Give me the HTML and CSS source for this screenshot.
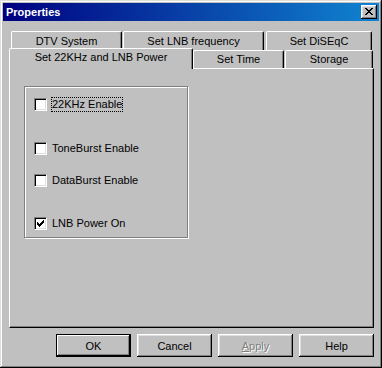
FILE: index.html
```html
<!DOCTYPE html>
<html lang="en">
<head>
  <meta charset="UTF-8">
  <title>Properties</title>
  <link rel="stylesheet" href="styles.css">
</head>
<body>

  <div class="window">
    <div class="titlebar">
      <span class="title">Properties</span>
      <button class="close-btn" title="Close">
        <svg width="8" height="7" viewBox="0 0 8 7" shape-rendering="crispEdges">
          <path fill="#000" d="M0 0h2v1h-2z M6 0h2v1h-2z M1 1h2v1h-2z M5 1h2v1h-2z M2 2h4v1h-4z M3 3h2v1h-2z M2 4h4v1h-4z M1 5h2v1h-2z M5 5h2v1h-2z M0 6h2v1h-2z M6 6h2v1h-2z"/>
        </svg>
      </button>
    </div>

    <div class="dialog">
      <div class="tabs">
        <div class="tab-row back">
          <div class="tab tab-dtv">DTV System</div>
          <div class="tab tab-lnb">Set LNB frequency</div>
          <div class="tab tab-diseqc">Set DiSEqC</div>
        </div>
        <div class="tab-row front">
          <div class="tab tab-power selected">Set 22KHz and LNB Power</div>
          <div class="tab tab-time">Set Time</div>
          <div class="tab tab-storage">Storage</div>
        </div>
      </div>

      <div class="panel">
        <div class="groupbox">
          <div class="check-row">
            <span class="checkbox"></span>
            <span class="label focused">22KHz Enable</span>
          </div>
          <div class="check-row far">
            <span class="checkbox"></span>
            <span class="label">ToneBurst Enable</span>
          </div>
          <div class="check-row near">
            <span class="checkbox"></span>
            <span class="label">DataBurst Enable</span>
          </div>
          <div class="check-row far last">
            <span class="checkbox">
              <svg width="7" height="7" viewBox="0 0 7 7" shape-rendering="crispEdges">
                <path fill="#000" d="M6 0h1v1h-1z M5 1h2v1h-2z M0 2h1v1h-1z M4 2h3v1h-3z M0 3h2v1h-2z M3 3h3v1h-3z M0 4h5v1h-5z M1 5h3v1h-3z M2 6h1v1h-1z"/>
              </svg>
            </span>
            <span class="label">LNB Power On</span>
          </div>
        </div>
      </div>

      <div class="buttons">
        <button class="btn default">OK</button>
        <button class="btn">Cancel</button>
        <button class="btn disabled"><u>A</u>pply</button>
        <button class="btn">Help</button>
      </div>
    </div>
  </div>

</body>
</html>
```

FILE: styles.css
```css
body {
  margin: 0;
  background: #c0c0c0;
  font-family: 'Liberation Sans', Arial, sans-serif;
  font-size: 11px;
  color: #000;
}

.window {
  width: 382px;
  height: 368px;
  box-sizing: border-box;
  padding: 3px;
  background: #c0c0c0;
  box-shadow: inset -1px -1px #000, inset 1px 1px #dfdfdf,
              inset -2px -2px #808080, inset 2px 2px #fff;
}

/* title bar */
.titlebar {
  height: 18px;
  display: flex;
  align-items: center;
  justify-content: space-between;
  background: linear-gradient(to right, #000080, #1084d0);
}

.title {
  color: #fff;
  font-weight: bold;
  line-height: 13px;
  padding-left: 3px;
}

.close-btn {
  width: 16px;
  height: 14px;
  margin-right: 2px;
  padding: 0;
  border: none;
  background: #c0c0c0;
  display: flex;
  align-items: flex-start;
  justify-content: flex-start;
  padding: 3px 0 0 4px;
  box-sizing: border-box;
  box-shadow: inset -1px -1px #000, inset 1px 1px #fff,
              inset -2px -2px #808080, inset 2px 2px #dfdfdf;
}

.close-btn svg {
  display: block;
}

.dialog {
  padding: 10px 5px 0 6px;
}

/* tabs */
.tab-row {
  display: flex;
  align-items: flex-end;
}

.tab-row.back {
  height: 19px;
  padding-left: 2px;
}

.tab-row.front {
  height: 18px;
}

.tab {
  box-sizing: border-box;
  display: flex;
  align-items: center;
  justify-content: center;
  line-height: 13px;
  white-space: nowrap;
  background: #c0c0c0;
  border-top: 1px solid #fff;
  border-left: 1px solid #fff;
  border-right: 1px solid #000;
  border-radius: 2px 2px 0 0;
  box-shadow: inset -1px 0 #808080;
}

.tab-row.back .tab { height: 19px; }
.tab-row.front .tab { height: 18px; }

.tab-dtv { width: 111px; margin-right: 1px; }
.tab-lnb { width: 141px; margin-right: 2px; }
.tab-diseqc { width: 106px; }

.tab-power { width: 184px; }
.tab-time { width: 91px; margin-right: 1px; }
.tab-storage { width: 88px; }

.tab-row.front .tab.selected {
  position: relative;
  z-index: 1;
  height: 21px;
  margin-bottom: -1px;
  align-items: flex-start;
  padding-top: 2px;
  border-radius: 2px 2px 0 0;
}

/* panel */
.panel {
  box-sizing: border-box;
  width: 365px;
  height: 260px;
  padding: 17px 0 0 14px;
  border-top: 1px solid #fff;
  border-left: 1px solid #fff;
  border-right: 1px solid #000;
  border-bottom: 1px solid #000;
  box-shadow: inset -1px -1px #808080;
}

.groupbox {
  box-sizing: border-box;
  width: 164px;
  height: 152px;
  padding: 10px 0 0 9px;
  border: 1px solid #808080;
  box-shadow: inset 1px 1px #fff, 1px 1px #fff;
}

.check-row {
  height: 15px;
  display: flex;
  align-items: center;
}

.check-row.near { margin-top: 17px; }
.check-row.far { margin-top: 29px; }
.check-row.last { margin-top: 28px; }

.checkbox {
  width: 13px;
  height: 13px;
  box-sizing: border-box;
  background: #fff;
  border: 1px solid;
  border-color: #808080 #fff #fff #808080;
  box-shadow: inset 1px 1px #000, inset -1px -1px #dfdfdf;
  display: flex;
  align-items: center;
  justify-content: center;
}

.checkbox svg {
  display: block;
}

.label {
  margin-left: 4px;
  line-height: 13px;
  border: 1px solid transparent;
}

.label.focused {
  border: 1px dotted #000;
}

/* bottom buttons */
.buttons {
  display: flex;
  justify-content: flex-end;
  gap: 6px;
  margin-top: 6px;
  width: 365px;
}

.btn {
  width: 75px;
  height: 23px;
  padding: 0;
  border: none;
  background: #c0c0c0;
  font-family: inherit;
  font-size: 11px;
  color: #000;
  box-shadow: inset -1px -1px #000, inset 1px 1px #fff,
              inset -2px -2px #808080, inset 2px 2px #dfdfdf;
}

.btn.default {
  box-shadow: inset 0 0 0 1px #000, inset -2px -2px #000, inset 2px 2px #fff,
              inset -3px -3px #808080;
}

.btn.disabled {
  color: #808080;
  text-shadow: 1px 1px #fff;
}
```
